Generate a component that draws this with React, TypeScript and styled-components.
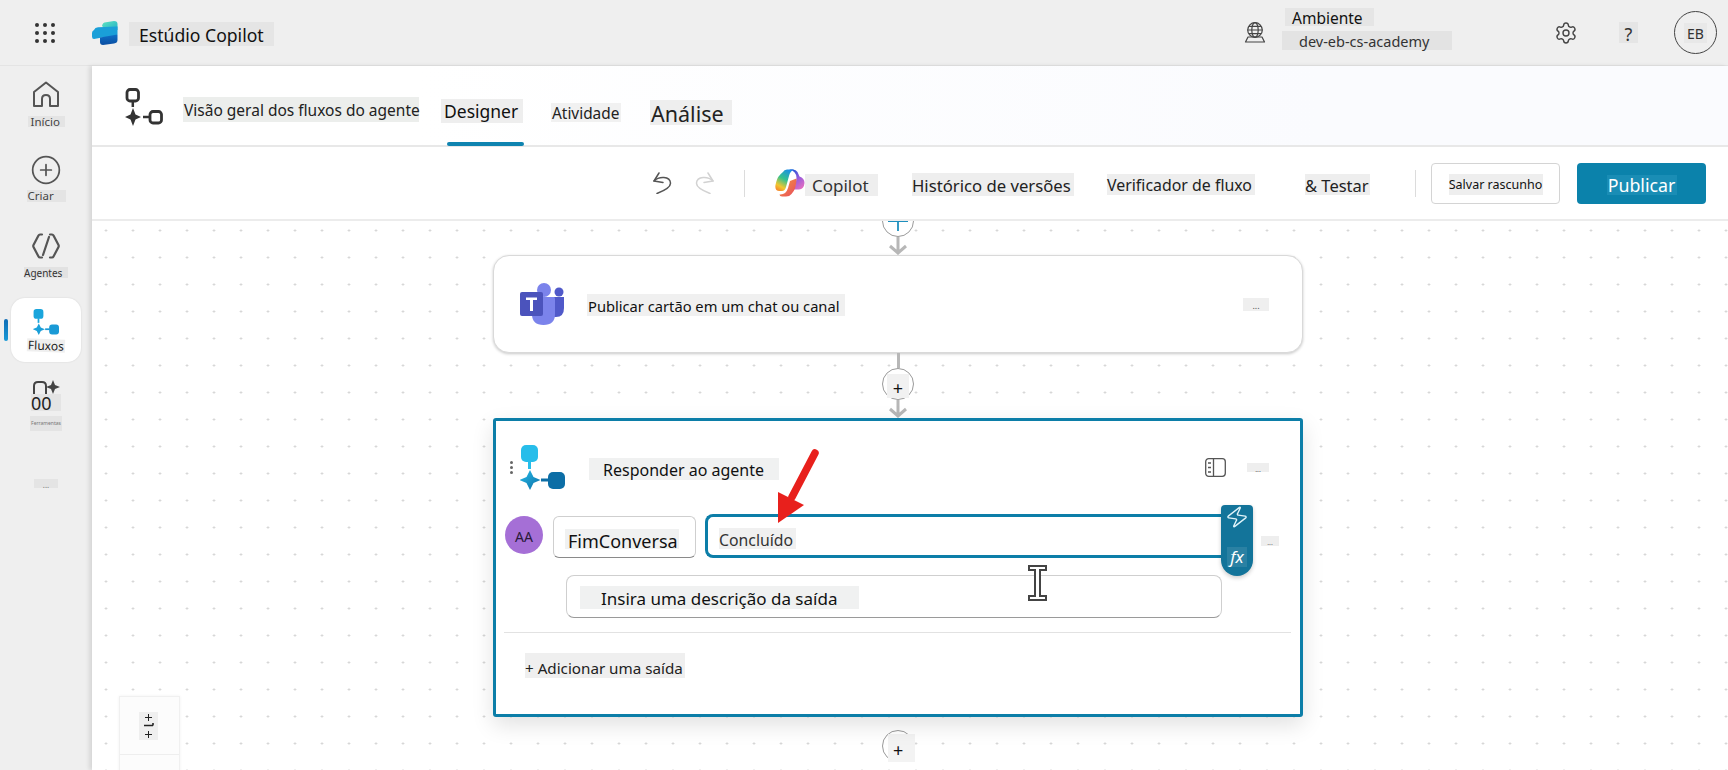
import React from "react";
import styled, { createGlobalStyle } from "styled-components";
import { CirclePlus, Settings, Zap } from "lucide-react";

// Interfaces
interface ChipProps {
  $w: number;
  $h: number;
  $size: number;
  $pad?: number;
  $top?: number;
  $ml?: number | "auto";
  $mt?: number;
  $bg?: string;
  $color?: string;
  $center?: boolean;
}

const GlobalStyle = createGlobalStyle`
  html, body {
    margin: 0;
    padding: 0;
    background: #efefef;
  }
  * {
    box-sizing: border-box;
  }
`;

export default function App() {
  return (
    <>
      <GlobalStyle />
      <Page>
        <Header>
          <WaffleGrid>
            {Array.from({ length: 9 }).map((_, i) => (
              <i key={i} />
            ))}
          </WaffleGrid>
          <StudioLogo />
          <Chip $w={145} $h={24} $size={17.6} $pad={10} $ml={11} $mt={3} $bg="#e5e5e5" $color="#111">
            Estúdio Copilot
          </Chip>
          <HeaderRight>
            <EnvIcon />
            <EnvColumn>
              <Chip $w={89} $h={18} $size={15.5} $pad={7} $ml={3} $bg="#e5e5e5" $color="#111">
                Ambiente
              </Chip>
              <Chip $w={170} $h={19} $size={14.5} $pad={17} $top={1} $bg="#e3e3e3" $color="#333">
                dev-eb-cs-academy
              </Chip>
            </EnvColumn>
            <GearWrap>
              <Settings size={24} strokeWidth={1.4} />
            </GearWrap>
            <Chip $w={19} $h={21} $size={18} $ml={41} $bg="#e5e5e5" $color="#333" $center>
              ?
            </Chip>
            <UserCircle>
              <Chip $w={23} $h={20} $size={14} $bg="#e8e8e8" $color="#333" $center>
                EB
              </Chip>
            </UserCircle>
          </HeaderRight>
        </Header>

        <Sidebar>
          <NavItem $mt={15} $gap={8}>
            <HomeIcon />
            <Chip $w={37} $h={11} $size={11.5} $pad={3} $top={0} $bg="#e4e4e4" $color="#444">
              Início
            </Chip>
          </NavItem>
          <NavItem $mt={27} $gap={4}>
            <CirclePlus size={32} strokeWidth={1.3} color="#555" />
            <Chip $w={39} $h={12} $size={11.5} $pad={1} $top={0} $bg="#e4e4e4" $color="#444">
              Criar
            </Chip>
          </NavItem>
          <NavItem $mt={31} $gap={8}>
            <AgentsIcon />
            <Chip $w={44} $h={11} $size={10} $top={0} $bg="#e2e2e2" $color="#333">
              Agentes
            </Chip>
          </NavItem>
          <ActiveTile>
            <ActiveMark />
            <FlowFilled $w={26} $h={26} $id="side" $from="#1aa5dc" $to="#1a9ad6" />
            <FluxosLabel>Fluxos</FluxosLabel>
          </ActiveTile>
          <NavItem $mt={18} $gap={0}>
            <SkillsIcon />
            <Chip $w={30} $h={17} $size={18} $top={0} $bg="#e4e4e4" $color="#222">
              00
            </Chip>
            <Chip $w={32} $h={15} $size={5} $mt={5} $top={0} $bg="#e4e4e4" $color="#777" $center>
              Ferramentas
            </Chip>
          </NavItem>
          <NavItem $mt={48} $gap={0}>
            <Chip $w={24} $h={9} $size={8} $bg="#e4e4e4" $color="#777" $center>
              ...
            </Chip>
          </NavItem>
        </Sidebar>

        <Main>
          <TitleBar>
            <FlowOutline />
            <Chip $w={236} $h={25} $size={15.5} $ml={20} $pad={1} $bg="#eceeec" $color="#222">
              Visão geral dos fluxos do agente
            </Chip>
            <DesignerTab>
              <Chip $w={82} $h={24} $size={17.5} $pad={3} $bg="#eeeeee" $color="#111">
                Designer
              </Chip>
            </DesignerTab>
            <Chip $w={70} $h={19} $size={15.4} $ml={28} $mt={5} $pad={1} $bg="#f1f1f1" $color="#222">
              Atividade
            </Chip>
            <Chip $w={82} $h={25} $size={21.5} $ml={29} $mt={5} $pad={1} $bg="#eeeeee" $color="#222">
              Análise
            </Chip>
          </TitleBar>

          <Toolbar>
            <UndoIcon />
            <RedoIcon />
            <ToolDivider $ml={29} />
            <CopilotMark />
            <Chip $w={73} $h={22} $size={17} $pad={7} $mt={3} $top={1} $bg="#eeeeee" $color="#333">
              Copilot
            </Chip>
            <Chip $w={162} $h={23} $size={16.7} $ml={34} $mt={3} $bg="#eeeeee" $color="#222">
              Histórico de versões
            </Chip>
            <Chip $w={148} $h={21} $size={15.9} $ml={33} $mt={3} $bg="#eeeeee" $color="#222">
              Verificador de fluxo
            </Chip>
            <Chip $w={65} $h={21} $size={16.5} $ml={50} $mt={3} $bg="#eeeeee" $color="#222">
              &amp; Testar
            </Chip>
            <ToolDivider $ml={45} />
            <SaveButton>
              <Chip $w={94} $h={21} $size={12.5} $mt={2} $bg="#eeeeee" $color="#111" $center>
                Salvar rascunho
              </Chip>
            </SaveButton>
            <PublishButton>
              <Chip $w={70} $h={20} $size={17.8} $mt={3} $bg="#1a8db5" $color="#fff" $center>
                Publicar
              </Chip>
            </PublishButton>
          </Toolbar>

          <Canvas>
            <FlowColumn>
              <AddCircle $first>
                <TopPlus />
              </AddCircle>
              <FlowArrow />
              <TeamsCard>
                <TeamsLogo />
                <Chip $w={258} $h={22} $size={14.7} $ml={22} $mt={2} $pad={1} $bg="#f0f0f0" $color="#111">
                  Publicar cartão em um chat ou canal
                </Chip>
                <Chip $w={26} $h={13} $size={9} $ml="auto" $bg="#efefef" $color="#555" $center>
                  ...
                </Chip>
              </TeamsCard>
              <Stem />
              <AddCircle>
                <Chip $w={22} $h={24} $size={18} $mt={4} $bg="#f1f1f1" $color="#111" $center>
                  +
                </Chip>
              </AddCircle>
              <FlowArrow />

              <ResponseCard>
                <HeadRow>
                  <DragDots>
                    <i />
                    <i />
                    <i />
                  </DragDots>
                  <IconSlot>
                    <FlowFilled $w={45} $h={45} $id="card" $from="#27bdea" $to="#0c6ea6" />
                  </IconSlot>
                  <Chip $w={190} $h={22} $size={16} $ml={24} $mt={3} $pad={14} $top={1} $bg="#f0f1f1" $color="#111">
                    Responder ao agente
                  </Chip>
                  <PanelIcon />
                  <Chip $w={22} $h={9} $size={7} $ml={21} $bg="#eeeeee" $color="#666" $center>
                    ...
                  </Chip>
                </HeadRow>

                <FieldRow>
                  <OutputAvatar>
                    <Chip $w={22} $h={16} $size={14} $bg="#a56fd6" $color="#2a1a3a" $center>
                      AA
                    </Chip>
                  </OutputAvatar>
                  <NameInput>
                    <Chip $w={114} $h={20} $size={18} $pad={3} $bg="#f0f1f1" $color="#111">
                      FimConversa
                    </Chip>
                  </NameInput>
                  <ValueInput>
                    <Chip $w={77} $h={21} $size={15.8} $top={4} $bg="#f0f0f0" $color="#333">
                      Concluído
                    </Chip>
                    <FxPill>
                      <Zap size={24} strokeWidth={1.4} />
                      <FxLabel>fx</FxLabel>
                    </FxPill>
                  </ValueInput>
                  <Chip $w={18} $h={10} $size={7} $ml={39} $mt={22} $bg="#eeeeee" $color="#777" $center>
                    ...
                  </Chip>
                </FieldRow>

                <DescriptionInput>
                  <Chip $w={279} $h={23} $size={17} $pad={21} $mt={2} $top={2} $bg="#f0f1f1" $color="#111">
                    Insira uma descrição da saída
                  </Chip>
                </DescriptionInput>

                <CardRule />

                <AddOutput>
                  <Chip $w={160} $h={25} $size={15.2} $top={6} $bg="#efefef" $color="#222">
                    + Adicionar uma saída
                  </Chip>
                </AddOutput>

                <TextCursor />
                <RedArrow />
              </ResponseCard>

              <AddCircle $last>
                <Chip $w={27} $h={28} $size={18} $ml={5} $mt={4} $pad={5} $bg="#f3f3f3" $color="#111">
                  +
                </Chip>
              </AddCircle>
            </FlowColumn>

            <ZoomPanel>
              <ZoomChip>
                <ZoomGlyphs />
              </ZoomChip>
              <ZoomRule />
            </ZoomPanel>
          </Canvas>
        </Main>
      </Page>
    </>
  );
}

/* Drawings */

function StudioLogo() {
  return (
    <LogoSvg width="26" height="24" viewBox="0 0 26 24">
      <defs>
        <linearGradient id="lgTop" x1="0" y1="0" x2="1" y2="1">
          <stop offset="0" stopColor="#5fe3c0" />
          <stop offset="1" stopColor="#1fb0c8" />
        </linearGradient>
        <linearGradient id="lgBottom" x1="0" y1="0" x2="0" y2="1">
          <stop offset="0" stopColor="#0f6fc6" />
          <stop offset="1" stopColor="#0a4ea2" />
        </linearGradient>
      </defs>
      <path d="M10 5 Q10.5 1.500 14 1.200 L22 0 Q25.500 0 25.500 3 V9 L15 10 Z" fill="url(#lgTop)" />
      <path d="M2 9 Q3 6.500 6 6.300 L25.500 5.500 V13 Q25.500 15 23 15.300 L10 16.500 L2 18 Q0 18 0 15.500 V12 Q0 10 2 9 Z" fill="#1a9fd8" />
      <path d="M8 16.500 L25.500 13.500 V19 Q25.500 22 22 22.500 L11 24 Q8 24 8 21 Z" fill="url(#lgBottom)" />
    </LogoSvg>
  );
}

function EnvIcon() {
  return (
    <svg width="22" height="21" viewBox="0 0 22 21" fill="none" stroke="#444" strokeWidth="1.200">
      <circle cx="11" cy="8" r="7.300" />
      <ellipse cx="11" cy="8" rx="3.200" ry="7.300" />
      <path d="M3.700 8H18.300M5 4.300H17M5 11.700H17" />
      <path d="M4 15 L1.500 20 H20.500 L18 15 H4 Z" strokeLinejoin="round" />
    </svg>
  );
}

function HomeIcon() {
  return (
    <svg width="28" height="27" viewBox="0 0 28 27" fill="none" stroke="#555" strokeWidth="2" strokeLinejoin="round">
      <path d="M2 25 H10 V18 Q10 14 14 14 Q18 14 18 18 V25 H26 V11 L14 1.500 L2 11 Z" />
    </svg>
  );
}

function AgentsIcon() {
  return (
    <svg width="28" height="26" viewBox="0 0 28 26" fill="none" stroke="#555" strokeWidth="2.200" strokeLinecap="round" strokeLinejoin="round">
      <path d="M10 1.500 H8 Q7 1.500 6.500 2.500 L1.500 12 Q1 13 1.500 14 L6.500 23.500 Q7 24.500 8 24.500 H10" />
      <path d="M18 1.500 H20 Q21 1.500 21.500 2.500 L26.500 12 Q27 13 26.500 14 L21.500 23.500 Q21 24.500 20 24.500 H18" />
      <path d="M17 4 L11 22" />
    </svg>
  );
}

function SkillsIcon() {
  return (
    <svg width="28" height="14" viewBox="0 0 28 14" fill="none">
      <path d="M2 14 V6 Q2 2 6 2 H10 Q14 2 14 6 V14" stroke="#444" strokeWidth="2" />
      <path d="M21 0 L23 5 L28 7 L23 9 L21 14 L19 9 L14 7 L19 5 Z" fill="#444" />
    </svg>
  );
}

function FlowOutline() {
  return (
    <OutlineSvg width="38" height="39" viewBox="0 0 38 39" fill="none">
      <rect x="2" y="1.500" width="11.500" height="11.500" rx="3" stroke="#333" strokeWidth="2.800" />
      <path d="M7.800 13 V19" stroke="#333" strokeWidth="2.500" />
      <path d="M7.500 20 L10 26.500 L15.500 29 L10 31.500 L7.500 38 L5 31.500 L-.5 29 L5 26.500 Z" fill="#333" transform="translate(.5 0)" />
      <path d="M18 29 H24" stroke="#333" strokeWidth="2.500" />
      <rect x="25" y="23.500" width="11.500" height="11.500" rx="3" stroke="#333" strokeWidth="2.800" />
    </OutlineSvg>
  );
}

function FlowFilled({ $w, $h, $id, $from, $to }: { $w: number; $h: number; $id: string; $from: string; $to: string }) {
  return (
    <svg width={$w} height={$h} viewBox="0 0 45 45">
      <defs>
        <linearGradient id={$id} x1="0" y1="0" x2="1" y2="1">
          <stop offset="0" stopColor={$from} />
          <stop offset="1" stopColor={$to} />
        </linearGradient>
      </defs>
      <rect x="1" y="0" width="17" height="17" rx="5" fill={$from} />
      <path d="M9.500 16 V24" stroke={$from} strokeWidth="3" />
      <path d="M9.500 25 L13 32 L20 35 L13 38 L9.500 45 L6 38 L-1 35 L6 32 Z" fill={`url(#${$id})`} transform="translate(.5 0)" />
      <path d="M21 35 H29" stroke={$to} strokeWidth="3" />
      <rect x="28" y="27" width="17" height="17" rx="5" fill={$to} />
    </svg>
  );
}

function UndoIcon() {
  return (
    <svg width="20" height="22" viewBox="0 0 20 22" fill="none" stroke="#555" strokeWidth="1.500" strokeLinecap="round" strokeLinejoin="round">
      <path d="M7 1 L2 9 L11 10.500" />
      <path d="M2 9 C7 4 18 4 18.500 11 C18.800 15 14 18 5 21.500" />
    </svg>
  );
}

function RedoIcon() {
  return (
    <RedoSvg width="20" height="22" viewBox="0 0 20 22" fill="none" stroke="#d2d2d2" strokeWidth="1.500" strokeLinecap="round" strokeLinejoin="round">
      <path d="M13 1 L18 9 L9 10.500" />
      <path d="M18 9 C13 4 2 4 1.500 11 C1.200 15 6 18 15 21.500" />
    </RedoSvg>
  );
}

function CopilotMark() {
  return (
    <CopilotSvg width="30" height="28" viewBox="0 0 30 28">
      <defs>
        <linearGradient id="cpLeft" x1="0.700" y1="0" x2="0.200" y2="1">
          <stop offset="0" stopColor="#1b8fe6" />
          <stop offset="0.450" stopColor="#35c28c" />
          <stop offset="0.800" stopColor="#f2c62e" />
          <stop offset="1" stopColor="#f58a2c" />
        </linearGradient>
        <linearGradient id="cpRight" x1="0.200" y1="0" x2="0.800" y2="1">
          <stop offset="0" stopColor="#1c56d6" />
          <stop offset="0.500" stopColor="#9a5bdc" />
          <stop offset="1" stopColor="#e76fbf" />
        </linearGradient>
        <linearGradient id="cpBottom" x1="0" y1="0" x2="1" y2="1">
          <stop offset="0" stopColor="#f59a3c" />
          <stop offset="1" stopColor="#e84a5f" />
        </linearGradient>
      </defs>
      <path d="M8 3 Q9 .5 12 .5 H19 Q15 2 14 7 L11 18 Q10 22 7 22 H4.500 Q-.5 22 .5 16 Q2 9 4 7 Q6 4.500 8 3 Z" fill="url(#cpLeft)" />
      <path d="M14 .5 H18 Q21 .5 22.500 3 L24.500 7.500 Q29.500 9 29.500 14 Q29 20 24 20.500 H17 Q20 19 20.800 14 L21.500 9 Q21.500 2 14 .5 Z" fill="url(#cpRight)" />
      <path d="M15 12 L21.500 9.500 Q21.500 20 16.500 25 Q14.500 27.500 11 27.500 H7 Q4.500 27.500 4.500 25.500 Q11 26 13 19 Z" fill="url(#cpBottom)" />
    </CopilotSvg>
  );
}

function TopPlus() {
  return (
    <svg width="22" height="22" viewBox="0 0 22 22" stroke="#1e8fbe" strokeWidth="1.800">
      <path d="M11 1 V21 M1 11 H21" />
    </svg>
  );
}

function FlowArrow() {
  return (
    <ArrowLink width="20" height="18" viewBox="0 0 20 18" fill="none" stroke="#b7b7b7" strokeWidth="3">
      <path d="M10 0 V16 M2 9 L10 16 L18 9" />
    </ArrowLink>
  );
}

function TeamsLogo() {
  return (
    <svg width="45" height="42" viewBox="0 0 45 42">
      <circle cx="39" cy="9" r="4.500" fill="#5059c9" />
      <path d="M32 14 H44 V25 Q44 34 36 34 H30 Z" fill="#5059c9" />
      <circle cx="24" cy="7" r="7" fill="#7b83eb" />
      <path d="M12 14 H34 Q35 14 35 16 V31 Q35 42 23.500 42 Q12 42 12 31 Z" fill="#7b83eb" />
      <rect x="0" y="9" width="23" height="24" rx="2" fill="#4b53bc" />
      <path d="M6 14.500 H17 V17 H13 V28 H10 V17 H6 Z" fill="#fff" />
    </svg>
  );
}

function PanelIcon() {
  return (
    <PanelSvg width="21" height="19" viewBox="0 0 21 19" fill="none" stroke="#555" strokeWidth="1.300">
      <rect x=".7" y=".7" width="19.600" height="17.600" rx="3" />
      <path d="M8.500 .7 V18.300" />
      <path d="M3 5 H6 M3 9.500 H6 M3 14 H6" strokeWidth="1.600" />
    </PanelSvg>
  );
}

function TextCursor() {
  return (
    <CursorSvg width="19" height="36" viewBox="0 0 19 36" fill="none">
      <path d="M1 1 H18 V5 H12 V31 H18 V35 H1 V31 H7 V5 H1 Z" fill="#fff" stroke="#444" strokeWidth="2" />
    </CursorSvg>
  );
}

function RedArrow() {
  return (
    <ArrowSvg width="44" height="76" viewBox="0 0 44 76" fill="none">
      <path d="M40 4 L17 48" stroke="#e8201c" strokeWidth="7.500" strokeLinecap="round" />
      <path d="M3 74 L3 43 L29 56 Z" fill="#e8201c" />
    </ArrowSvg>
  );
}

function ZoomGlyphs() {
  return (
    <svg width="19" height="28" viewBox="0 0 19 28" fill="none" stroke="#222" strokeWidth="1">
      <path d="M9.500 2 V9 M6 5.500 H13" />
      <path d="M5 13.500 H14 M14 13.500 V11" strokeWidth="1.600" />
      <path d="M9.500 19 V26 M6 22.500 H13" />
    </svg>
  );
}

/* Shell */

const Page = styled.div`
  display: grid;
  grid-template-columns: 92px 1fr;
  grid-template-rows: 66px 1fr;
  width: 1728px;
  height: 770px;
  overflow: hidden;
  font-family: "Noto Sans", "Open Sans", sans-serif;
  background: #efefef;
`;

const Chip = styled.span<ChipProps>`
  display: inline-flex;
  align-items: center;
  flex: none;
  justify-content: ${(p) => (p.$center ? "center" : "flex-start")};
  width: ${(p) => p.$w}px;
  height: ${(p) => p.$h}px;
  padding-left: ${(p) => p.$pad ?? 0}px;
  padding-top: ${(p) => p.$top ?? 3}px;
  margin-left: ${(p) => (p.$ml === "auto" ? "auto" : `${p.$ml ?? 0}px`)};
  margin-top: ${(p) => p.$mt ?? 0}px;
  font-size: ${(p) => p.$size}px;
  line-height: 1;
  white-space: nowrap;
  background: ${(p) => p.$bg ?? "transparent"};
  color: ${(p) => p.$color ?? "#222"};
`;

/* Top bar */

const Header = styled.header`
  grid-column: 1 / -1;
  display: flex;
  align-items: center;
  padding-left: 35px;
  background: #efefef;
  border-bottom: 1px solid #e4e4e4;
`;

const WaffleGrid = styled.div`
  display: grid;
  grid-template-columns: repeat(3, 4px);
  gap: 4px;

  i {
    width: 4px;
    height: 4px;
    border-radius: 50%;
    background: #333;
  }
`;

const LogoSvg = styled.svg`
  margin-left: 37px;
`;

const HeaderRight = styled.div`
  display: flex;
  align-items: center;
  align-self: stretch;
  margin-left: auto;
  padding-right: 11px;
`;

const EnvColumn = styled.div`
  display: flex;
  flex-direction: column;
  gap: 5px;
  align-self: flex-start;
  margin-left: 16px;
  padding-top: 8px;
`;

const GearWrap = styled.div`
  display: flex;
  margin-left: 102px;
  color: #444;
`;

const UserCircle = styled.div`
  display: flex;
  align-items: center;
  justify-content: center;
  width: 43px;
  height: 43px;
  margin-left: 36px;
  border: 1px solid #444;
  border-radius: 50%;
`;

/* Left rail */

const Sidebar = styled.nav`
  display: flex;
  flex-direction: column;
  align-items: center;
  background: #efefef;
`;

const NavItem = styled.div<{ $mt: number; $gap: number }>`
  display: flex;
  flex-direction: column;
  align-items: center;
  margin-top: ${(p) => p.$mt}px;
  gap: ${(p) => p.$gap}px;
`;

const ActiveTile = styled.div`
  position: relative;
  display: flex;
  flex-direction: column;
  align-items: center;
  width: 70px;
  height: 64px;
  margin-top: 20px;
  padding-top: 11px;
  background: #fff;
  border-radius: 14px;
  box-shadow: 0 0 2px rgba(0, 0, 0, 0.12);
`;

const ActiveMark = styled.span`
  position: absolute;
  left: -7px;
  top: 21px;
  width: 4px;
  height: 22px;
  border-radius: 2px;
  background: linear-gradient(#0f6cb5, #1a9ad6);
`;

const FluxosLabel = styled.span`
  margin-top: 4px;
  padding: 0 1px;
  font-size: 12px;
  line-height: 13px;
  color: #222;
  background: #efefef;
  transform: rotate(2deg);
`;

/* Title bar */

const Main = styled.main`
  display: flex;
  flex-direction: column;
  min-width: 0;
  background: #fff;
  box-shadow: -3px 0 4px rgba(0, 0, 0, 0.1);
  position: relative;
`;

const TitleBar = styled.div`
  display: flex;
  align-items: center;
  flex: none;
  height: 81px;
  padding: 8px 0 0 33px;
  background: linear-gradient(90deg, #fff 20%, #fafbfe 75%);
  border-bottom: 2px solid #e8e8e8;
`;

const OutlineSvg = styled.svg`
  margin-top: -4px;
`;

const DesignerTab = styled.div`
  position: relative;
  margin-left: 22px;
  margin-top: 3px;

  &::after {
    content: "";
    position: absolute;
    left: 6px;
    right: -1px;
    top: 43px;
    height: 4px;
    border-radius: 2px;
    background: #0f84b0;
  }
`;

/* Toolbar */

const Toolbar = styled.div`
  display: flex;
  align-items: center;
  flex: none;
  height: 74px;
  padding-left: 560px;
  background: #fff;
  border-bottom: 2px solid #ececec;
`;

const RedoSvg = styled.svg`
  margin-left: 23px;
`;

const ToolDivider = styled.span<{ $ml: number }>`
  width: 1px;
  height: 27px;
  margin-left: ${(p) => p.$ml}px;
  background: #dcdcdc;
`;

const CopilotSvg = styled.svg`
  margin-left: 30px;
`;

const SaveButton = styled.button`
  display: flex;
  align-items: center;
  justify-content: center;
  width: 129px;
  height: 41px;
  margin-left: 15px;
  padding: 0;
  background: #fff;
  border: 1px solid #d4d4d4;
  border-radius: 4px;
  font-family: inherit;
`;

const PublishButton = styled.button`
  display: flex;
  align-items: center;
  justify-content: center;
  width: 129px;
  height: 41px;
  margin-left: 17px;
  padding: 0;
  background: #0b82ab;
  border: none;
  border-radius: 4px;
  font-family: inherit;
`;

/* Canvas */

const Canvas = styled.div`
  position: relative;
  flex: 1;
  overflow: hidden;
  background-color: #fff;
  background-image: radial-gradient(circle, #cfcfcf 0.9px, transparent 1.2px);
  background-size: 27px 27px;
  background-position: 0.5px -4px;
`;

const FlowColumn = styled.div`
  display: flex;
  flex-direction: column;
  align-items: center;
  width: 810px;
  margin-left: 401px;
`;

const AddCircle = styled.div<{ $first?: boolean; $last?: boolean }>`
  display: flex;
  align-items: center;
  justify-content: ${(p) => (p.$last ? "flex-start" : "center")};
  flex: none;
  width: 32px;
  height: 32px;
  margin-top: ${(p) => (p.$first ? "-16px" : p.$last ? "13px" : "0")};
  background: #fff;
  border: 1px solid #9a9a9a;
  border-radius: 50%;
`;

const ArrowLink = styled.svg`
  flex: none;
  display: block;
`;

const Stem = styled.span`
  flex: none;
  width: 3px;
  height: 15px;
  background: #b7b7b7;
`;

const TeamsCard = styled.div`
  display: flex;
  align-items: center;
  flex: none;
  width: 810px;
  height: 98px;
  padding: 0 33px 0 26px;
  background: #fff;
  border: 1px solid #d9d9d9;
  border-radius: 16px;
  box-shadow: 0 1px 3px rgba(0, 0, 0, 0.22);
`;

const ResponseCard = styled.section`
  position: relative;
  flex: none;
  width: 810px;
  height: 299px;
  background: #fff;
  border: 3px solid #0c7ea8;
  border-radius: 3px;
  box-shadow: 0 8px 22px rgba(0, 0, 0, 0.12);
`;

const HeadRow = styled.div`
  display: flex;
  align-items: center;
  height: 45px;
  margin-top: 24px;
  padding: 0 31px 0 13px;
`;

const DragDots = styled.div`
  display: flex;
  flex-direction: column;
  gap: 2px;
  width: 4px;
  margin-left: 1px;

  i {
    width: 3px;
    height: 3px;
    background: #666;
    border-radius: 50%;
  }
`;

const IconSlot = styled.div`
  display: flex;
  margin-left: 6px;
`;

const PanelSvg = styled.svg`
  margin-left: auto;
`;

const FieldRow = styled.div`
  display: flex;
  align-items: flex-start;
  height: 44px;
  margin-top: 24px;
  padding-left: 9px;
`;

const OutputAvatar = styled.div`
  display: flex;
  align-items: center;
  justify-content: center;
  flex: none;
  width: 38px;
  height: 38px;
  margin-top: 2px;
  background: #a56fd6;
  border-radius: 50%;
`;

const NameInput = styled.div`
  display: flex;
  align-items: flex-end;
  flex: none;
  width: 143px;
  height: 42px;
  margin: 2px 0 0 10px;
  padding: 0 0 8px 11px;
  background: #fff;
  border: 1px solid #cfcfcf;
  border-bottom-color: #8a8a8a;
  border-radius: 6px;
`;

const ValueInput = styled.div`
  position: relative;
  display: flex;
  align-items: flex-end;
  flex: none;
  width: 517px;
  height: 44px;
  margin-left: 9px;
  padding: 0 0 6px 11px;
  background: #fff;
  border: 3px solid #0c7ea8;
  border-right: none;
  border-radius: 8px 0 0 8px;
`;

const FxPill = styled.div`
  position: absolute;
  left: 513px;
  top: -12px;
  display: flex;
  flex-direction: column;
  align-items: center;
  justify-content: space-between;
  width: 32px;
  height: 71px;
  padding: 0 0 9px;
  overflow: hidden;
  color: #dff3f9;
  background: #13749a;
  border-radius: 4px 4px 16px 16px;
  box-shadow: 0 2px 4px rgba(0, 0, 0, 0.2);

  svg {
    transform: rotate(8deg);
  }
`;

const FxLabel = styled.span`
  width: 20px;
  height: 20px;
  font-size: 17px;
  line-height: 20px;
  font-style: italic;
  text-align: center;
  color: #fff;
  background: #2a81a3;
`;

const DescriptionInput = styled.div`
  display: flex;
  align-items: center;
  width: 656px;
  height: 43px;
  margin: 17px 0 0 70px;
  padding-left: 13px;
  background: #fff;
  border: 1px solid #cfcfcf;
  border-bottom-color: #9a9a9a;
  border-radius: 8px;
`;

const CardRule = styled.div`
  height: 1px;
  margin: 14px 9px 0 8px;
  background: #e2e2e2;
`;

const AddOutput = styled.div`
  margin: 20px 0 0 29px;
`;

const CursorSvg = styled.svg`
  position: absolute;
  left: 532px;
  top: 144px;
`;

const ArrowSvg = styled.svg`
  position: absolute;
  left: 279px;
  top: 28px;
`;

const ZoomPanel = styled.div`
  position: absolute;
  left: 27px;
  top: 475px;
  width: 61px;
  height: 90px;
  background: #fcfcfc;
  border: 1px solid #f0f0f0;
  box-shadow: 0 0 3px rgba(0, 0, 0, 0.06);
`;

const ZoomChip = styled.div`
  display: flex;
  width: 19px;
  height: 28px;
  margin: 15px 0 0 19px;
  background: #efefef;
`;

const ZoomRule = styled.div`
  height: 1px;
  margin-top: 14px;
  background: #eeeeee;
`;
